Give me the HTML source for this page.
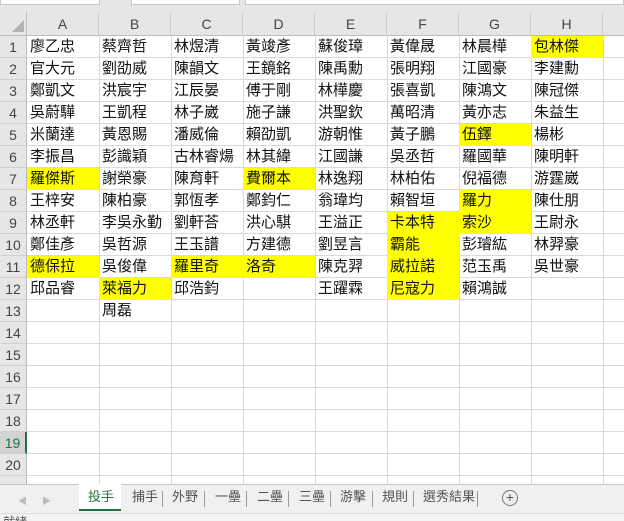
<!DOCTYPE html>
<html><head><meta charset="utf-8"><style>
*{margin:0;padding:0;box-sizing:border-box}
body{width:624px;height:521px;overflow:hidden;background:#fff;position:relative;font-family:"Liberation Sans","Noto Sans CJK TC",sans-serif}
.a{position:absolute}
.c{position:absolute;height:22px;font-size:15px;line-height:22px;padding-left:3px;color:#111;white-space:nowrap;font-family:"Liberation Sans","Noto Sans CJK TC",sans-serif}
.y{background:#ffff00}
.h{position:absolute;top:12px;height:24px;font-size:14px;line-height:24px;text-align:center;color:#444;background:#e6e6e6;border-right:1px solid #cfcfcf;border-bottom:1px solid #bdbdbd}
.r{position:absolute;left:0;width:27px;height:22px;font-size:14px;line-height:22px;text-align:center;color:#444;background:#e6e6e6;border-bottom:1px solid #cfcfcf;border-right:1px solid #bdbdbd}
.vl{position:absolute;top:36px;width:1px;height:449px;background:#d9d9d9}
.hl{position:absolute;left:27px;width:597px;height:1px;background:#d9d9d9}
.t{position:absolute;top:485px;height:28px;line-height:24px;font-size:13px;color:#555}
.s{position:absolute;top:491px;width:1px;height:16px;background:#999}
</style></head><body>
<div class="a" style="left:0;top:0;width:624px;height:12px;background:#e6e6e6"></div>
<div class="a" style="left:0;top:0;width:100px;height:5px;background:#fff;border:1px solid #c8c8c8;border-top:none"></div>
<div class="a" style="left:131px;top:0;width:109px;height:5px;background:#fff;border:1px solid #c8c8c8;border-top:none"></div>
<div class="a" style="left:245px;top:0;width:379px;height:5px;background:#fff;border:1px solid #c8c8c8;border-top:none"></div>
<div class="a" style="left:0;top:12px;width:27px;height:24px;background:#e6e6e6;border-right:1px solid #bdbdbd;border-bottom:1px solid #bdbdbd"></div>
<div class="a" style="left:12px;top:20px;width:0;height:0;border-left:12px solid transparent;border-bottom:12px solid #b4b4b4"></div>
<div class="h" style="left:27px;width:72px">A</div>
<div class="h" style="left:99px;width:72px">B</div>
<div class="h" style="left:171px;width:72px">C</div>
<div class="h" style="left:243px;width:72px">D</div>
<div class="h" style="left:315px;width:72px">E</div>
<div class="h" style="left:387px;width:72px">F</div>
<div class="h" style="left:459px;width:72px">G</div>
<div class="h" style="left:531px;width:72px">H</div>
<div class="h" style="left:603px;width:21px;border-right:none"></div>

<div class="r" style="top:36px">1</div><div class="r" style="top:58px">2</div><div class="r" style="top:80px">3</div><div class="r" style="top:102px">4</div><div class="r" style="top:124px">5</div><div class="r" style="top:146px">6</div><div class="r" style="top:168px">7</div><div class="r" style="top:190px">8</div><div class="r" style="top:212px">9</div><div class="r" style="top:234px">10</div><div class="r" style="top:256px">11</div><div class="r" style="top:278px">12</div><div class="r" style="top:300px">13</div><div class="r" style="top:322px">14</div><div class="r" style="top:344px">15</div><div class="r" style="top:366px">16</div><div class="r" style="top:388px">17</div><div class="r" style="top:410px">18</div><div class="r" style="top:432px;background:#d2d2d2;border-right:2px solid #217346;color:#217346">19</div><div class="r" style="top:454px">20</div><div class="r" style="top:476px;height:9px"></div>

<div class="vl" style="left:99px"></div><div class="vl" style="left:171px"></div><div class="vl" style="left:243px"></div><div class="vl" style="left:315px"></div><div class="vl" style="left:387px"></div><div class="vl" style="left:459px"></div><div class="vl" style="left:531px"></div><div class="vl" style="left:603px"></div>
<div class="hl" style="top:57px"></div><div class="hl" style="top:79px"></div><div class="hl" style="top:101px"></div><div class="hl" style="top:123px"></div><div class="hl" style="top:145px"></div><div class="hl" style="top:167px"></div><div class="hl" style="top:189px"></div><div class="hl" style="top:211px"></div><div class="hl" style="top:233px"></div><div class="hl" style="top:255px"></div><div class="hl" style="top:277px"></div><div class="hl" style="top:299px"></div><div class="hl" style="top:321px"></div><div class="hl" style="top:343px"></div><div class="hl" style="top:365px"></div><div class="hl" style="top:387px"></div><div class="hl" style="top:409px"></div><div class="hl" style="top:431px"></div><div class="hl" style="top:453px"></div><div class="hl" style="top:475px"></div>

<!-- A -->
<div class="c" style="left:27px;top:36px;width:72px">廖乙忠</div>
<div class="c" style="left:27px;top:58px;width:72px">官大元</div>
<div class="c" style="left:27px;top:80px;width:72px">鄭凱文</div>
<div class="c" style="left:27px;top:102px;width:72px">吳蔚驊</div>
<div class="c" style="left:27px;top:124px;width:72px">米蘭達</div>
<div class="c" style="left:27px;top:146px;width:72px">李振昌</div>
<div class="c y" style="left:27px;top:168px;width:72px">羅傑斯</div>
<div class="c" style="left:27px;top:190px;width:72px">王梓安</div>
<div class="c" style="left:27px;top:212px;width:72px">林丞軒</div>
<div class="c" style="left:27px;top:234px;width:72px">鄭佳彥</div>
<div class="c y" style="left:27px;top:256px;width:72px">德保拉</div>
<div class="c" style="left:27px;top:278px;width:72px">邱品睿</div>
<!-- B -->
<div class="c" style="left:99px;top:36px;width:72px">蔡齊哲</div>
<div class="c" style="left:99px;top:58px;width:72px">劉劭威</div>
<div class="c" style="left:99px;top:80px;width:72px">洪宸宇</div>
<div class="c" style="left:99px;top:102px;width:72px">王凱程</div>
<div class="c" style="left:99px;top:124px;width:72px">黃恩賜</div>
<div class="c" style="left:99px;top:146px;width:72px">彭識穎</div>
<div class="c" style="left:99px;top:168px;width:72px">謝榮豪</div>
<div class="c" style="left:99px;top:190px;width:72px">陳柏豪</div>
<div class="c" style="left:99px;top:212px;width:72px">李吳永勤</div>
<div class="c" style="left:99px;top:234px;width:72px">吳哲源</div>
<div class="c" style="left:99px;top:256px;width:72px">吳俊偉</div>
<div class="c y" style="left:99px;top:278px;width:72px">萊福力</div>
<div class="c" style="left:99px;top:300px;width:72px">周磊</div>
<!-- C -->
<div class="c" style="left:171px;top:36px;width:72px">林煜清</div>
<div class="c" style="left:171px;top:58px;width:72px">陳韻文</div>
<div class="c" style="left:171px;top:80px;width:72px">江辰晏</div>
<div class="c" style="left:171px;top:102px;width:72px">林子崴</div>
<div class="c" style="left:171px;top:124px;width:72px">潘威倫</div>
<div class="c" style="left:171px;top:146px;width:72px">古林睿煬</div>
<div class="c" style="left:171px;top:168px;width:72px">陳育軒</div>
<div class="c" style="left:171px;top:190px;width:72px">郭恆孝</div>
<div class="c" style="left:171px;top:212px;width:72px">劉軒荅</div>
<div class="c" style="left:171px;top:234px;width:72px">王玉譜</div>
<div class="c y" style="left:171px;top:256px;width:72px">羅里奇</div>
<div class="c" style="left:171px;top:278px;width:72px">邱浩鈞</div>
<!-- D -->
<div class="c" style="left:243px;top:36px;width:72px">黃竣彥</div>
<div class="c" style="left:243px;top:58px;width:72px">王鏡銘</div>
<div class="c" style="left:243px;top:80px;width:72px">傅于剛</div>
<div class="c" style="left:243px;top:102px;width:72px">施子謙</div>
<div class="c" style="left:243px;top:124px;width:72px">賴劭凱</div>
<div class="c" style="left:243px;top:146px;width:72px">林其緯</div>
<div class="c y" style="left:243px;top:168px;width:72px">費爾本</div>
<div class="c" style="left:243px;top:190px;width:72px">鄭鈞仁</div>
<div class="c" style="left:243px;top:212px;width:72px">洪心騏</div>
<div class="c" style="left:243px;top:234px;width:72px">方建德</div>
<div class="c y" style="left:243px;top:256px;width:72px">洛奇</div>
<!-- E -->
<div class="c" style="left:315px;top:36px;width:72px">蘇俊璋</div>
<div class="c" style="left:315px;top:58px;width:72px">陳禹勳</div>
<div class="c" style="left:315px;top:80px;width:72px">林樺慶</div>
<div class="c" style="left:315px;top:102px;width:72px">洪聖欽</div>
<div class="c" style="left:315px;top:124px;width:72px">游朝惟</div>
<div class="c" style="left:315px;top:146px;width:72px">江國謙</div>
<div class="c" style="left:315px;top:168px;width:72px">林逸翔</div>
<div class="c" style="left:315px;top:190px;width:72px">翁瑋均</div>
<div class="c" style="left:315px;top:212px;width:72px">王溢正</div>
<div class="c" style="left:315px;top:234px;width:72px">劉昱言</div>
<div class="c" style="left:315px;top:256px;width:72px">陳克羿</div>
<div class="c" style="left:315px;top:278px;width:72px">王躍霖</div>
<!-- F -->
<div class="c" style="left:387px;top:36px;width:72px">黃偉晟</div>
<div class="c" style="left:387px;top:58px;width:72px">張明翔</div>
<div class="c" style="left:387px;top:80px;width:72px">張喜凱</div>
<div class="c" style="left:387px;top:102px;width:72px">萬昭清</div>
<div class="c" style="left:387px;top:124px;width:72px">黃子鵬</div>
<div class="c" style="left:387px;top:146px;width:72px">吳丞哲</div>
<div class="c" style="left:387px;top:168px;width:72px">林柏佑</div>
<div class="c" style="left:387px;top:190px;width:72px">賴智垣</div>
<div class="c y" style="left:387px;top:212px;width:72px">卡本特</div>
<div class="c y" style="left:387px;top:234px;width:72px">霸能</div>
<div class="c y" style="left:387px;top:256px;width:72px">威拉諾</div>
<div class="c y" style="left:387px;top:278px;width:72px">尼寇力</div>
<!-- G -->
<div class="c" style="left:459px;top:36px;width:72px">林晨樺</div>
<div class="c" style="left:459px;top:58px;width:72px">江國豪</div>
<div class="c" style="left:459px;top:80px;width:72px">陳鴻文</div>
<div class="c" style="left:459px;top:102px;width:72px">黃亦志</div>
<div class="c y" style="left:459px;top:124px;width:72px">伍鐸</div>
<div class="c" style="left:459px;top:146px;width:72px">羅國華</div>
<div class="c" style="left:459px;top:168px;width:72px">倪福德</div>
<div class="c y" style="left:459px;top:190px;width:72px">羅力</div>
<div class="c y" style="left:459px;top:212px;width:72px">索沙</div>
<div class="c" style="left:459px;top:234px;width:72px">彭璿紘</div>
<div class="c" style="left:459px;top:256px;width:72px">范玉禹</div>
<div class="c" style="left:459px;top:278px;width:72px">賴鴻誠</div>
<!-- H -->
<div class="c y" style="left:531px;top:36px;width:72px">包林傑</div>
<div class="c" style="left:531px;top:58px;width:72px">李建勳</div>
<div class="c" style="left:531px;top:80px;width:72px">陳冠傑</div>
<div class="c" style="left:531px;top:102px;width:72px">朱益生</div>
<div class="c" style="left:531px;top:124px;width:72px">楊彬</div>
<div class="c" style="left:531px;top:146px;width:72px">陳明軒</div>
<div class="c" style="left:531px;top:168px;width:72px">游霆崴</div>
<div class="c" style="left:531px;top:190px;width:72px">陳仕朋</div>
<div class="c" style="left:531px;top:212px;width:72px">王尉永</div>
<div class="c" style="left:531px;top:234px;width:72px">林羿豪</div>
<div class="c" style="left:531px;top:256px;width:72px">吳世豪</div>

<!-- tab bar -->
<div class="a" style="left:0;top:484px;width:624px;height:29px;background:#f0f0f0;border-top:1px solid #c6c6c6"></div>
<div class="a" style="left:18px;top:494px;font-size:9px;color:#bbb">◀</div>
<div class="a" style="left:42px;top:494px;font-size:9px;color:#bbb">▶</div>
<div class="a" style="left:79px;top:484px;width:42px;height:27px;background:#fff;border-bottom:2px solid #217346"></div>
<div class="t" style="left:88px;color:#217346">投手</div>
<div class="t" style="left:132px">捕手</div><div class="s" style="left:162px"></div>
<div class="t" style="left:172px">外野</div><div class="s" style="left:204px"></div>
<div class="t" style="left:215px">一壘</div><div class="s" style="left:246px"></div>
<div class="t" style="left:257px">二壘</div><div class="s" style="left:288px"></div>
<div class="t" style="left:299px">三壘</div><div class="s" style="left:330px"></div>
<div class="t" style="left:340px">游擊</div><div class="s" style="left:372px"></div>
<div class="t" style="left:382px">規則</div><div class="s" style="left:413px"></div>
<div class="t" style="left:423px">選秀結果</div><div class="s" style="left:477px"></div>
<div class="a" style="left:502px;top:490px;width:16px;height:16px;border:1px solid #777;border-radius:50%;text-align:center;line-height:13px;font-size:14px;color:#555">+</div>
<div class="a" style="left:0;top:513px;width:624px;height:8px;background:#f3f3f3;border-top:1px solid #ddd;overflow:hidden"><div style="position:absolute;left:3px;top:2px;font-size:12px;color:#555;line-height:12px">就緒</div></div>
</body></html>
